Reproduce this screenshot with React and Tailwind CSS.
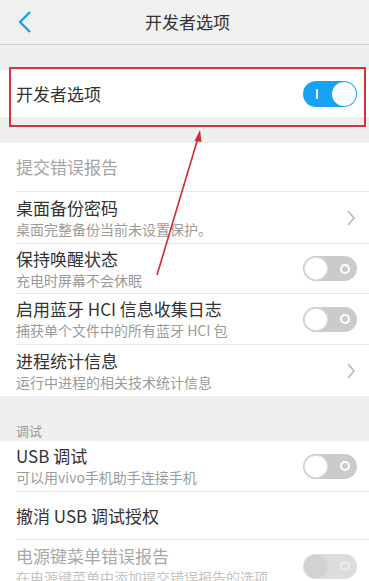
import React from "react";

function Toggle({ on, disabled }) {
  if (on) {
    return (
      <div className="w-[54px] h-[26px] rounded-full bg-[#17a3f3] flex items-center justify-between pl-[13px] pr-[1px] shrink-0">
        <div className="w-[2px] h-[10px] bg-white rounded-sm" />
        <div className="w-[24px] h-[24px] rounded-full bg-white" />
      </div>
    );
  }
  return (
    <div
      className={
        disabled
          ? "w-[54px] h-[25px] rounded-full bg-[#dcdcdc] flex items-center justify-between pl-[1px] pr-[7px] shrink-0"
          : "w-[54px] h-[25px] rounded-full bg-[#cbcbcb] flex items-center justify-between pl-[1px] pr-[7px] shrink-0"
      }
    >
      <div
        className={
          disabled
            ? "w-[24px] h-[23px] rounded-full bg-[#d2d2d2]"
            : "w-[24px] h-[23px] rounded-full bg-white border border-[#dedede]"
        }
      />
      <div
        className={
          disabled
            ? "w-[10px] h-[10px] rounded-full border-2 border-[#ececec]"
            : "w-[10px] h-[10px] rounded-full border-2 border-white"
        }
      />
    </div>
  );
}

function Chevron() {
  return (
    <svg width="10" height="18" viewBox="0 0 10 18" className="shrink-0 mr-[1px]">
      <path d="M2 2 L8 9 L2 16" fill="none" stroke="#b8b8b8" strokeWidth="1.6" />
    </svg>
  );
}

function Row({ title, sub, right, h, disabled, divider = true }) {
  return (
    <div className={`flex items-center pl-4 pr-3 ${h}`}>
      <div className={`flex-1 flex flex-col justify-center h-full ${divider ? "" : ""}`}>
        <p className={`text-[17px] leading-[22px] ${disabled ? "text-[#a8a8a8]" : "text-[#333]"}`}>{title}</p>
        {sub && (
          <p className={`text-[14px] leading-[20px] ${disabled ? "text-[#c4c4c4]" : "text-[#9b9b9b]"}`}>{sub}</p>
        )}
      </div>
      {right}
    </div>
  );
}

function Divider() {
  return <div className="ml-4 h-px bg-[#e6e6e6]" />;
}

export default function App() {
  return (
    <div
      className="w-[369px] h-[581px] overflow-hidden bg-[#efefef] relative"
      style={{ fontFamily: '"Noto Sans CJK SC", "Noto Sans", sans-serif' }}
    >
      {/* Header */}
      <div className="h-[45px] flex items-center border-b border-[#d0d0d0] bg-[#f0f0f0]">
        <div className="w-[50px] pl-[18px] flex items-center">
          <svg width="14" height="22" viewBox="0 0 14 22">
            <path d="M12 1 L2 11 L12 21" fill="none" stroke="#1aa1f0" strokeWidth="2.4" strokeLinejoin="round" />
          </svg>
        </div>
        <p className="flex-1 text-center text-[17px] text-[#333] pl-[6px]">开发者选项</p>
        <div className="w-[50px]" />
      </div>

      {/* Developer options switch */}
      <div className="mt-[25px] h-[47px] bg-white flex items-center pl-4 pr-3">
        <p className="flex-1 text-[17px] text-[#333]">开发者选项</p>
        <Toggle on />
      </div>

      <div className="mt-[26px] bg-white">
        <div className="h-[48px] flex items-center pl-4">
          <p className="text-[17px] text-[#a3a3a3]">提交错误报告</p>
        </div>
        <Divider />
        <Row h="h-[51px]" title="桌面备份密码" sub="桌面完整备份当前未设置保护。" right={<Chevron />} />
        <Divider />
        <Row h="h-[49px]" title="保持唤醒状态" sub="充电时屏幕不会休眠" right={<Toggle />} />
        <Divider />
        <Row h="h-[50px]" title="启用蓝牙 HCI 信息收集日志" sub="捕获单个文件中的所有蓝牙 HCI 包" right={<Toggle />} />
        <Divider />
        <Row h="h-[51px]" title="进程统计信息" sub="运行中进程的相关技术统计信息" right={<Chevron />} />
      </div>

      <div className="h-[45px] flex items-end pl-4 pb-[1px]">
        <p className="text-[13px] text-[#9a9a9a] leading-[18px]">调试</p>
      </div>

      <div className="bg-white">
        <Row h="h-[50px]" title="USB 调试" sub="可以用vivo手机助手连接手机" right={<Toggle />} />
        <Divider />
        <Row h="h-[47px]" title="撤消 USB 调试授权" />
        <Divider />
        <Row h="h-[52px]" title="电源键菜单错误报告" sub="在电源键菜单中添加提交错误报告的选项" right={<Toggle disabled />} disabled />
      </div>

      {/* Annotation: red box and arrow */}
      <div className="absolute left-[9px] top-[67px] w-[357px] h-[60px] border-2 border-[#d9333a] pointer-events-none" />
      <svg className="absolute left-0 top-0 pointer-events-none" width="369" height="581">
        <line x1="157" y1="275" x2="198" y2="138" stroke="#d42a30" strokeWidth="1.6" />
        <polygon points="200,130 194.5,141 201.5,142" fill="#d42a30" />
      </svg>
    </div>
  );
}
